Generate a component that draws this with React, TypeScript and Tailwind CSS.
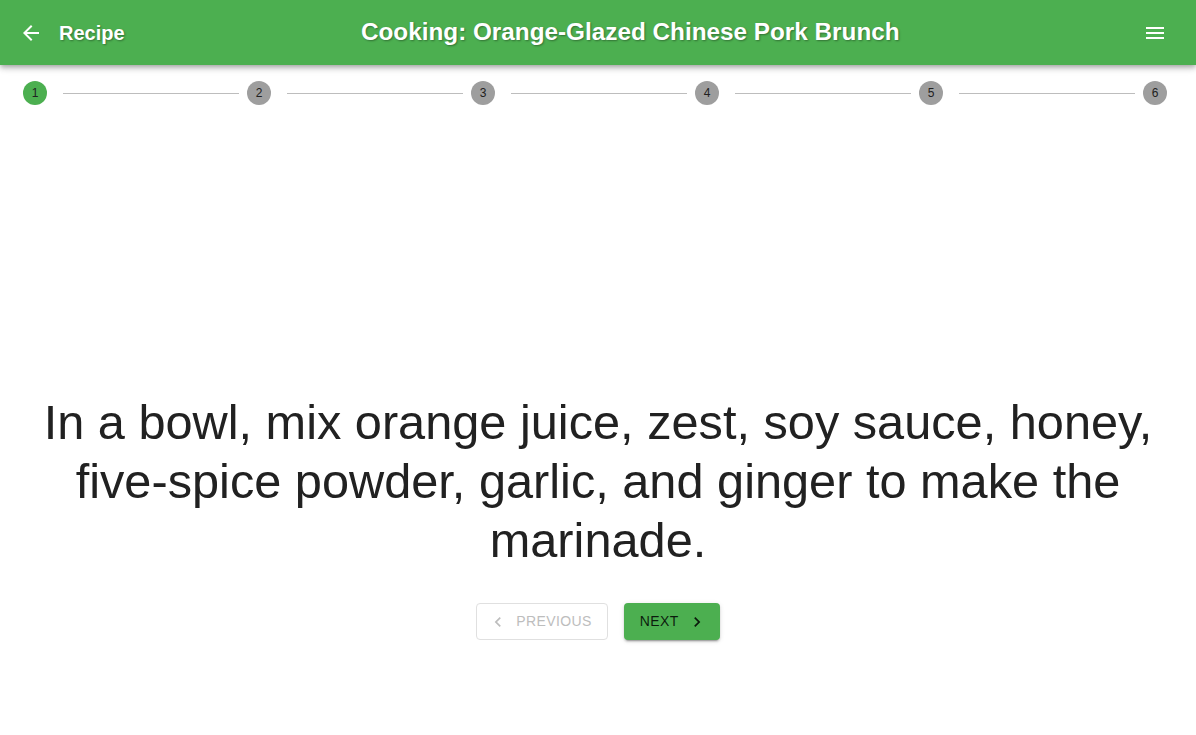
import React from "react";

const steps = [1, 2, 3, 4, 5, 6];

const ArrowBack = () => (
  <svg viewBox="0 0 24 24" className="w-6 h-6" fill="currentColor">
    <path d="M20 11H7.83l5.59-5.59L12 4l-8 8 8 8 1.41-1.41L7.83 13H20v-2z" />
  </svg>
);

const MenuIcon = () => (
  <svg viewBox="0 0 24 24" className="w-6 h-6" fill="currentColor">
    <path d="M3 18h18v-2H3v2zm0-5h18v-2H3v2zm0-7v2h18V6H3z" />
  </svg>
);

const ChevronLeft = () => (
  <svg viewBox="0 0 24 24" className="w-5 h-5" fill="currentColor">
    <path d="M15.41 7.41 14 6l-6 6 6 6 1.41-1.41L10.83 12z" />
  </svg>
);

const ChevronRight = () => (
  <svg viewBox="0 0 24 24" className="w-5 h-5" fill="currentColor">
    <path d="M10 6 8.59 7.41 13.17 12l-4.58 4.59L10 18l6-6z" />
  </svg>
);

export default function App() {
  const active = 1;

  return (
    <div className="h-screen bg-white flex flex-col font-['Liberation_Sans',Arial,sans-serif] text-[#212121] overflow-hidden">
      {/* App bar */}
      <header className="h-[65px] shrink-0 bg-[#4caf50] text-white flex items-center pl-[19px] pr-[29px] shadow-[0_2px_4px_-1px_rgba(0,0,0,0.2),0_4px_5px_0_rgba(0,0,0,0.14),0_1px_10px_0_rgba(0,0,0,0.12)] relative z-10">
        <div className="flex items-center">
          <ArrowBack />
          <span className="ml-[16px] text-[20px] font-bold [text-shadow:1px_1px_2px_rgba(0,0,0,0.35)]">Recipe</span>
        </div>
        <h1 className="flex-1 text-center text-[24.3px] font-bold mr-[7px] [text-shadow:1px_1px_2px_rgba(0,0,0,0.35)]">
          Cooking: Orange-Glazed Chinese Pork Brunch
        </h1>
        <MenuIcon />
      </header>

      {/* Stepper */}
      <div className="flex items-center pl-[15px] pr-[13px] pt-[16px]">
        {steps.map((n, i) => (
          <React.Fragment key={n}>
            <div className="px-2 flex items-center">
              <div className="pr-2">
                <div
                  className={`w-6 h-6 rounded-full flex items-center justify-center text-[12px] text-[#212121] ${
                    n === active ? "bg-[#4caf50]" : "bg-[#9e9e9e]"
                  }`}
                >
                  {n}
                </div>
              </div>
            </div>
            {i < steps.length - 1 && <div className="flex-1 h-px bg-[#bdbdbd]" />}
          </React.Fragment>
        ))}
      </div>

      {/* Step content */}
      <main className="flex flex-col items-center px-6 pt-[288px]">
        <p className="text-[48.7px] leading-[59px] text-center text-[#212121]">
          In a bowl, mix orange juice, zest, soy sauce, honey, five-spice powder, garlic, and ginger to make the marinade.
        </p>
        <div className="flex gap-4 mt-[33px]">
          <button
            disabled
            className="h-[37px] flex items-center pl-[15px] pr-[15px] border border-[#e0e0e0] rounded text-[14px] tracking-[0.4px] text-[#bdbdbd] uppercase"
          >
            <span className="-ml-1 mr-2">
              <ChevronLeft />
            </span>
            Previous
          </button>
          <button className="h-[37px] flex items-center pl-4 pr-[17px] bg-[#4caf50] rounded text-[14px] tracking-[0.4px] text-black/85 uppercase shadow-[0_3px_1px_-2px_rgba(0,0,0,0.2),0_2px_2px_0_rgba(0,0,0,0.14),0_1px_5px_0_rgba(0,0,0,0.12)]">
            Next
            <span className="ml-2 -mr-1">
              <ChevronRight />
            </span>
          </button>
        </div>
      </main>
    </div>
  );
}
